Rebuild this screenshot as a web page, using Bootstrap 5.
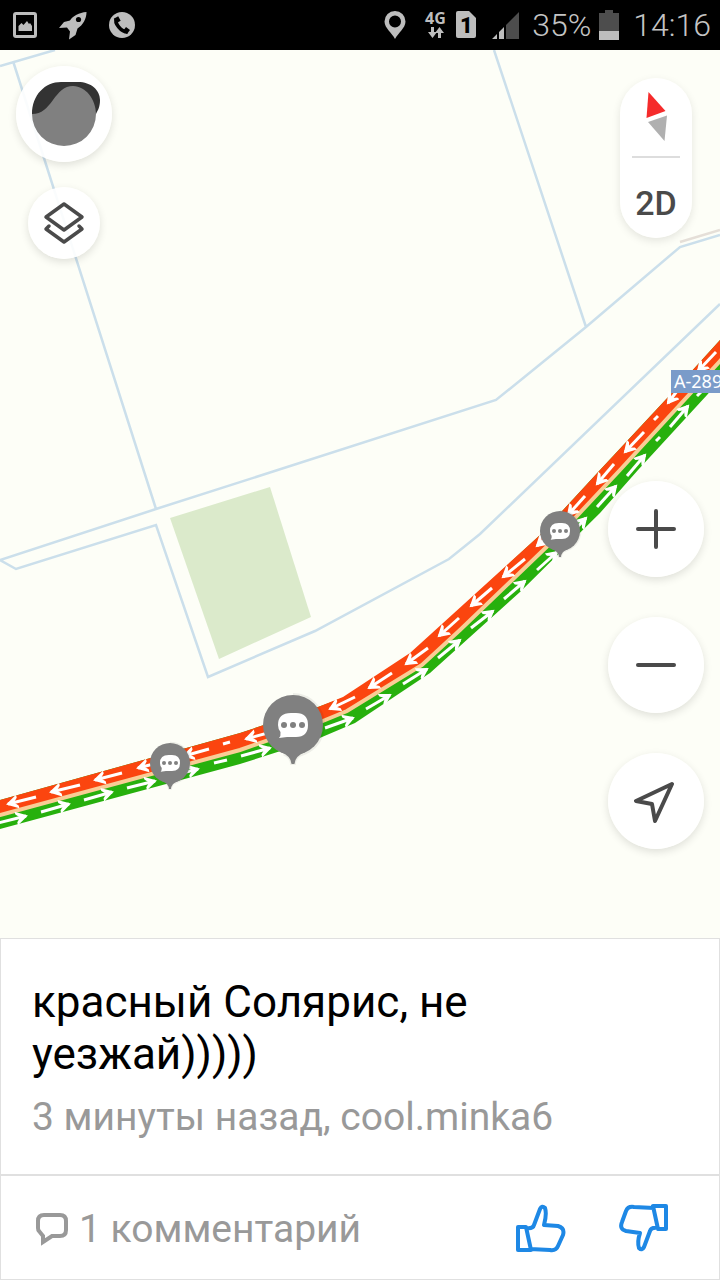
<!DOCTYPE html>
<html lang="ru">
<head>
<meta charset="utf-8">
<meta name="viewport" content="width=device-width, initial-scale=1">
<title>Карта — комментарий</title>
<link href="https://cdn.jsdelivr.net/npm/bootstrap@5.3.0/dist/css/bootstrap.min.css" rel="stylesheet">
<style>
body { font-family: Roboto, "Noto Sans", sans-serif; background: #fdfef7; }
.status-bar { height: 50px; background: #000; color: #c4c4c4; font-size: 32px; font-weight: 300; line-height: 50px; padding: 0 9px 0 12px; }
.status-bar svg { flex: none; }
.notices { gap: 19px; }
.indicators { gap: 14px; }
.signal-group { gap: 12px; }
.battery-group { gap: 8px; }
.map-area { min-height: 600px; background: #fdfef7; }
.map-canvas { inset: 0; width: 100%; height: 100%; }
.controls-left { top: 16px; left: 16px; gap: 25px; }
.controls-right { top: 0; bottom: 0; right: 16px; padding: 28px 0 89px; }
.zoom-stack { gap: 40px; }
.map-btn { border: 0; padding: 0; color: #4a4a4a; background: rgba(255,255,255,.9); box-shadow: 0 3px 8px rgba(0,0,0,.12); }
.size-lg { width: 96px; height: 96px; }
.size-md { width: 72px; height: 72px; }
.pill { width: 72px; height: 160px; border-radius: 36px; color: #4a4a4a; background: rgba(255,255,255,.9); box-shadow: 0 3px 8px rgba(0,0,0,.1); }
.pill button { flex: none; width: 100%; height: 78px; border: 0; padding: 0; background: none; color: inherit; font-size: 34px; font-weight: 500; line-height: 48px; }
.pill .tilt { padding-top: 12px; }
.pill-rule { width: 48px; height: 2px; background: #ddd; }
.note { border: 1px solid #e0e0e0; background: #fff; }
.note-main { padding: 37px 31px 33px; }
.note-title { font-size: 44px; font-weight: 400; line-height: 52px; color: #000; max-width: 500px; margin: 0 0 13px; }
.note-meta { font-size: 39px; line-height: 48px; color: #999; }
.note-foot { border-top: 2px solid #e0e0e0; height: 105px; padding: 0 49px 0 34px; }
.comment-link { font-size: 39px; line-height: 48px; color: #999; gap: 10px; padding-top: 3px; }
.vote { border: 0; padding: 0; background: none; color: #1e88e5; }
.votes { gap: 52px; }
</style>
</head>
<body class="d-flex flex-column min-vh-100">

<header class="status-bar d-flex align-items-center justify-content-between">
  <div class="notices d-flex align-items-center">
    <svg width="26" height="28" viewBox="0 0 26 28"><rect x="2.500" y="2.500" width="21" height="23" rx="1.500" fill="none" stroke="#bdbdbd" stroke-width="3"/><path d="M6.500 20v-5l3-3 2 2 3.500-4 2 3 1-1 2 3v5z" fill="#bdbdbd"/></svg>
    <svg width="32" height="30" viewBox="0 0 32 30"><path d="M29.500 2C22 2.500 16 6 13 10.500L7 12 2 18l8-.5 3 4-1 8 6.500-4.500 2-6.500C26 15 29.500 9 29.500 2z" fill="#bdbdbd"/><circle cx="21.500" cy="9.500" r="2.600" fill="#000"/></svg>
    <svg width="28" height="28" viewBox="0 0 28 28"><circle cx="14" cy="14" r="13" fill="#bdbdbd"/><path d="M8.500 7.500C6 12 13 21 19.500 21" fill="none" stroke="#000" stroke-width="3.600"/><path d="M8 6.500l2.500 4.500M16.500 18l4 3" stroke="#000" stroke-width="5"/></svg>
  </div>
  <div class="indicators d-flex align-items-center">
    <svg width="22" height="30" viewBox="0 0 22 30"><path fill-rule="evenodd" d="M11 1a10.500 10.500 0 0 0-10.500 10.500C.5 18 8 23 11 29c3-6 10.500-11 10.500-17.500A10.500 10.500 0 0 0 11 1zm0 4.500a6 6 0 1 1 0 12 6 6 0 0 1 0-12z" fill="#bdbdbd"/></svg>
    <svg width="58" height="40" viewBox="0 0 58 40" fill="#bdbdbd"><text x="5" y="19" font-family="Open Sans, sans-serif" font-size="16" font-weight="700">4G</text><path d="M11 22h3v5h3l-4.500 6-4.500-6h3zM18 33v-5h-3l4.500-6 4.500 6h-3v5z"/><path d="M38 6h11l7 7v18a2 2 0 0 1-2 2H38a2 2 0 0 1-2-2V8a2 2 0 0 1 2-2z"/><text x="40" y="28" font-family="Roboto, sans-serif" font-size="22" font-weight="900" fill="#000">1</text></svg>
    <div class="signal-group d-flex align-items-center">
      <svg width="28" height="28" viewBox="0 0 28 28"><path d="M0 28l5-5v5zM7 28v-7l5-5v12z" fill="#bdbdbd"/><path d="M14 28V14L27 1v27z" fill="#4d4d4d"/></svg>
      <div class="battery-group d-flex align-items-center">
        <span>35%</span>
        <svg width="20" height="30" viewBox="0 0 20 30"><path d="M0 3h6V0h8v3h6v27H0z" fill="#4d4d4d"/><path d="M0 21h20v9H0z" fill="#bdbdbd"/></svg>
      </div>
    </div>
    <span>14:16</span>
  </div>
</header>

<main class="map-area position-relative flex-grow-1 overflow-hidden">
  <svg class="map-canvas position-absolute" viewBox="0 50 720 888" preserveAspectRatio="xMidYMid slice" role="img" aria-label="Карта дороги А-289">
    <defs>
      <marker id="tip" markerUnits="userSpaceOnUse" markerWidth="14" markerHeight="16" refX="11" refY="7" orient="auto"><path d="M1 0L13 7 1 14 1 11 5 7 1 3z" fill="#fff"/></marker>
      <g id="pin">
        <path d="M0-30A30 30 0 1 1-9 28.600Q-2 31-1 38H1Q2 31 9 28.600A30 30 0 0 0 0-30z" fill="#000" opacity=".06" stroke="#000" stroke-width="4"/>
        <circle r="30" fill="#808080"/><path d="M-12 27Q-2 31-1.500 39H1.500Q2 31 12 27z" fill="#808080"/>
        <path d="M-2-12H3Q15-12 15 0T3 12H-6L-14 13Q-12 11-12.500 7-15 4-15 0-15-12-2-12z" fill="#fff"/>
        <circle cx="-9" r="3" fill="#808080"/><circle r="3" fill="#808080"/><circle cx="9" r="3" fill="#808080"/>
      </g>
    </defs>
    <path d="M170 518L270 487 311 617 219 659z" fill="#dbeacb"/>
    <g fill="none" stroke="#cbdfeb" stroke-width="2.500">
      <path d="M0 66L55 50M13 61L156 509M494 50L586 327M0 560L156 509 496 400 586 327 680 247 720 235M0 560L16 569 156 525 208 677 315 631 449 559 480 534 720 304"/>
      <path d="M680 242L720 230" stroke="#e5dfd8"/>
    </g>
    <path d="M-20 805L0 800 240 733 318 707 345 697 410 655 540 535 600 470 670 395 720 340 740 318V358L720 380 707 395 638 470 600 513 520 592 430 673 355 723 315 740 240 764 0 829-20 834z" fill="#27b00d"/>
    <path d="M-20 805L0 800 240 733 318 707 343 697 410 653 540 535 600 470 670 395 720 340 740 318V338L720 360 620 469 560 533 460 629 422 664 347 711 318 721 240 750 0 815-20 820z" fill="#fb450f"/>
    <path d="M-20 820L0 815 240 750 318 723 347 711 422 665 460 630 560 534 620 470 720 361 740 339" fill="none" stroke="#f9cd96" stroke-width="4"/>
    <g stroke="#fff" stroke-width="3">
      <g style="marker-end:url(#tip)">
        <path d="M36 797L8 804"/><path d="M80 785L51 792"/><path d="M122 773L95 780"/><path d="M165 761L138 768"/><path d="M209 749L184 756"/><path d="M275 731L246 739"/>
        <path d="M355 697L330 709"/><path d="M392 673L369 688"/><path d="M428 648L406 664"/><path d="M459 618L439 636"/><path d="M492 588L471 606"/><path d="M525 559L503 577"/><path d="M557 528L537 546"/><path d="M585 496L568 515"/><path d="M614 464L597 484"/><path d="M644 432L625 452"/><path d="M683 383L668 403"/><path d="M716 352L698 371"/>
        <path d="M-2 823L26 816"/><path d="M41 812L69 804"/><path d="M84 800L112 792"/><path d="M127 788L155 781"/><path d="M170 776L198 769"/><path d="M241 756L270 748"/><path d="M325 728L353 718"/><path d="M366 709L390 695"/><path d="M403 684L427 669"/><path d="M438 658L460 640"/><path d="M471 628L493 611"/><path d="M504 599L525 581"/><path d="M537 570L557 552"/><path d="M568 537L586 518"/><path d="M597 507L616 486"/><path d="M627 476L645 455"/><path d="M670 427L688 406"/>
      </g>
      <path d="M230 742L223 744M214 763L227 760M658 416L654 420M656 441L660 437M697 396L701 392"/>
    </g>
    <rect x="671" y="370" width="60" height="23" fill="#7a9bc9"/>
    <text x="674" y="388" font-family="Noto Sans, sans-serif" font-size="18" fill="#fff">A-289</text>
    <use href="#pin" transform="translate(170 763) scale(.667)"/>
    <use href="#pin" transform="translate(560 531) scale(.667)"/>
    <use href="#pin" transform="translate(293 725)"/>
  </svg>

  <div class="controls-left position-absolute d-flex flex-column align-items-center">
    <button type="button" class="map-btn size-lg rounded-circle" aria-label="Профиль">
      <svg width="96" height="96" viewBox="0 0 96 96"><path d="M16 48C16 29 29 16 45 16H62C75 16 84 24 84 34 84 41 82 44 80 48z" fill="#333"/><path d="M16 48C26 48 31 42 37 34S48 20 57 20C70 20 80 34 80 48A32 32 0 0 1 16 48z" fill="#808080"/></svg>
    </button>
    <button type="button" class="map-btn size-md rounded-circle d-flex align-items-center justify-content-center" aria-label="Слои">
      <svg width="44" height="44" viewBox="0 0 44 44" fill="none" stroke="currentColor" stroke-width="3.500" stroke-linejoin="round" stroke-linecap="round"><path d="M22 3L40 16 22 29 4 16zM7 25L4 28 22 41 40 28 37 25"/></svg>
    </button>
  </div>

  <div class="controls-right position-absolute d-flex flex-column align-items-center justify-content-between">
    <div class="pill d-flex flex-column align-items-center">
      <button type="button" aria-label="Компас" class="d-flex align-items-center justify-content-center">
        <svg width="24" height="50" viewBox="0 0 24 50"><path d="M4.500 0L21.500 19 2.500 26z" fill="#f52b2b"/><path d="M4 30L23 23.500 20.500 49z" fill="#b0b0b0"/></svg>
      </button>
      <div class="pill-rule"></div>
      <button type="button" class="tilt">2D</button>
    </div>
    <div class="zoom-stack d-flex flex-column">
      <button type="button" class="map-btn size-lg rounded-circle" aria-label="Приблизить">
        <svg width="40" height="40" viewBox="0 0 40 40" stroke="currentColor" stroke-width="4" stroke-linecap="round"><path d="M20 2V38M2 20H38"/></svg>
      </button>
      <button type="button" class="map-btn size-lg rounded-circle" aria-label="Отдалить">
        <svg width="40" height="40" viewBox="0 0 40 40" stroke="currentColor" stroke-width="4" stroke-linecap="round"><path d="M2 20H38"/></svg>
      </button>
      <button type="button" class="map-btn size-lg rounded-circle" aria-label="Моё местоположение">
        <svg width="44" height="44" viewBox="0 0 44 44" fill="none" stroke="currentColor" stroke-width="4" stroke-linejoin="round"><path d="M38 5L2 22 18 25 21 42z"/></svg>
      </button>
    </div>
  </div>
</main>

<section class="note">
  <div class="note-main">
    <h1 class="note-title">красный Солярис, не уезжай)))))</h1>
    <div class="note-meta">3 минуты назад, cool.minka6</div>
  </div>
  <div class="note-foot d-flex align-items-center justify-content-between">
    <a href="#" class="comment-link d-flex align-items-center text-decoration-none">
      <svg width="34" height="34" viewBox="0 0 34 34" fill="none" stroke="currentColor" stroke-width="4"><path d="M9 3H25Q31 3 31 9V18Q31 24 25 24H17L8 30V24L4 19Q3 18 3 16V9Q3 3 9 3z"/></svg>
      <span>1 комментарий</span>
    </a>
    <div class="votes d-flex align-items-center">
      <button type="button" class="vote d-flex" aria-label="Нравится">
        <svg width="52" height="52" viewBox="0 0 52 52" fill="none" stroke="currentColor" stroke-width="4" stroke-linejoin="round"><path d="M12 25H4V48H17L12 25zM12 26Q19 27 20 23L26 7Q28 3 31 6 33 12 30 23L44 24Q51 26 49 33L44 44Q42 49 36 48L16 47"/></svg>
      </button>
      <button type="button" class="vote d-flex" aria-label="Не нравится">
        <svg width="52" height="52" viewBox="0 0 52 52" fill="none" stroke="currentColor" stroke-width="4" stroke-linejoin="round"><path d="M40 27H48V4H35L40 27zM40 26Q33 25 32 29L26 45Q24 49 21 46 19 40 22 31L8 29Q1 27 4 20L8 9Q10 4 16 5L36 6"/></svg>
      </button>
    </div>
  </div>
</section>

<script src="https://cdn.jsdelivr.net/npm/bootstrap@5.3.0/dist/js/bootstrap.bundle.min.js"></script>
</body>
</html>
